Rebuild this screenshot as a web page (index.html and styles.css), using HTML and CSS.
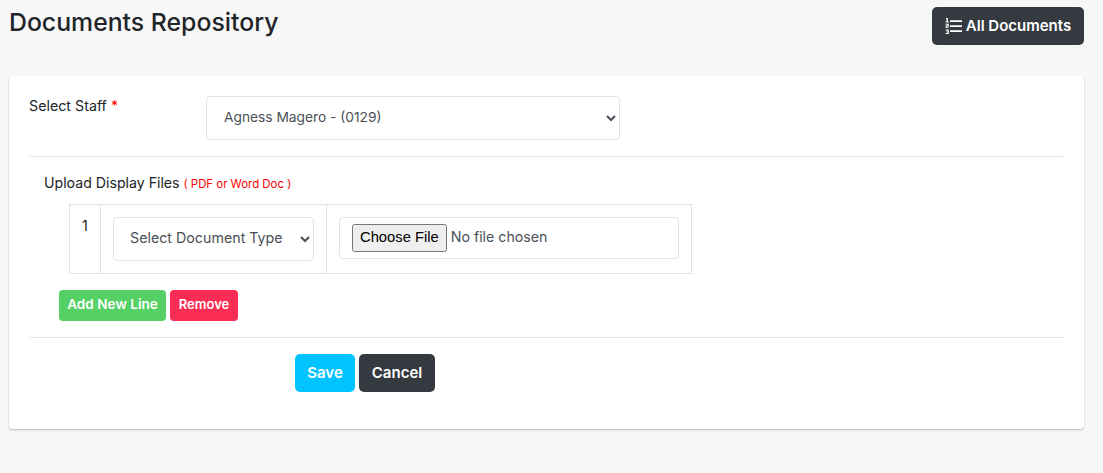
FILE: index.html
```html
<!DOCTYPE html>
<html lang="en">
<head>
<meta charset="utf-8">
<title>Documents Repository</title>
<link rel="stylesheet" href="styles.css">
</head>
<body>
<header class="page-head">
  <h1 class="page-title">Documents Repository</h1>
  <a class="btn btn-dark btn-all" href="#">
    <svg class="icon-list" viewBox="0 0 17 16" width="17" height="16" aria-hidden="true">
      <path d="M5 2.2h12v1.7H5zM5 7.2h12v1.7H5zM5 12.2h12v1.7H5z" fill="#fff"/>
      <path d="M1.4 0h1.5v3.4h1v1H.5v-1h1V1.1H.9zM.6 5.8h3.2v2.5H1.9v.5h1.9v1H.6V7.4h1.9v-.6H.6zM.6 11.4h3.2V16H.6v-1h1.9v-.7H1.2v-.9h1.3v-1H.6z" fill="#fff"/>
    </svg>
    <span>All Documents</span>
  </a>
</header>
<main class="card">
  <div class="staff-row">
    <label class="staff-label">Select Staff <span class="req">*</span></label>
    <select class="control staff-select">
      <option>Agness Magero - (0129)</option>
    </select>
  </div>
  <hr class="rule">
  <div class="upload">
    <div class="upload-title">Upload Display Files <small class="hint">( PDF or Word Doc )</small></div>
    <table class="files">
      <tr>
        <td class="num">1</td>
        <td class="type"><select class="control type-select"><option>Select Document Type</option></select></td>
        <td class="file"><input class="control file-input" type="file"></td>
      </tr>
    </table>
  </div>
  <div class="line-actions">
    <button class="btn btn-sm btn-green" type="button">Add New Line</button>
    <button class="btn btn-sm btn-red" type="button">Remove</button>
  </div>
  <hr class="rule">
  <div class="form-actions">
    <button class="btn btn-cyan" type="button">Save</button>
    <button class="btn btn-dark" type="button">Cancel</button>
  </div>
</main>
</body>
</html>
```
FILE: styles.css
```css
* { box-sizing: border-box; }
html, body { height: 100%; }
body {
  margin: 0;
  padding: 0 19px 0 9px;
  background: #f7f7f7;
  color: #212529;
  font-family: Inter, "Liberation Sans", sans-serif;
  font-size: 14.25px;
  overflow: hidden;
}
.page-head {
  display: flex;
  justify-content: space-between;
  align-items: flex-start;
  padding-top: 7px;
  height: 76px;
}
.page-title {
  margin: -1px 0 0;
  font-size: 24.8px;
  line-height: 32px;
  font-weight: 500;
  color: #212529;
}
.btn {
  display: inline-flex;
  align-items: center;
  justify-content: center;
  border: 0;
  border-radius: 5px;
  color: #fff;
  font-family: inherit;
  font-size: 15px;
  font-weight: 600;
  text-decoration: none;
  padding: 0 0 2px;
}
.btn-dark { background: #343a40; }
.btn-all { width: 152px; height: 38px; gap: 4px; padding-bottom: 1px; }
.icon-list { flex: none; }
.btn-cyan { background: #00c3ff; width: 60px; height: 38px; }
.form-actions .btn-dark { width: 76px; height: 38px; }
.btn-sm { height: 31px; font-size: 13px; border-radius: 4px; padding-bottom: 4px; }
.btn-green { background: #54d065; width: 107px; font-size: 13.6px; }
.btn-red { background: #fb2d55; width: 68px; }
.card {
  height: 353px;
  background: #fff;
  border-radius: 4px;
  box-shadow: 0 1px 2px rgba(0,0,0,.25);
  padding: 20px 21px 20px 20px;
}
.staff-row { display: flex; align-items: flex-start; }
.staff-label { width: 177px; line-height: 20px; color: #212529; }
.req { color: #f00; }
.control {
  height: 44px;
  background: #fff;
  border: 1px solid #e2e2e8;
  border-radius: 4px;
  color: #495057;
  font-family: inherit;
  font-size: 14.2px;
}
.staff-select { width: 414px; padding: 0 13px 2px; font-size: 13.75px; }
.rule { border: 0; border-top: 1px solid #e4e4e4; margin: 16px 0 0; }
.upload { padding: 17px 0 0 15px; }
.upload-title { line-height: 18px; font-size: 14.15px; }
.hint { color: #f00; font-size: 11.4px; }
.files {
  border-collapse: collapse;
  margin: 11px 0 0 25px;
  width: 623px;
  height: 70px;
}
.files td { border: 1px solid #dfdfe6; padding: 12px; vertical-align: top; }
.files .num { width: 32px; }
.files .type { width: 226px; }
.type-select { width: 201px; padding: 0 12px 4px; font-size: 14.25px; }
.file-input { width: 340px; height: 42px; padding: 6px 12px; }
.file-input::file-selector-button { font-size: 14.75px; height: 28px; padding-bottom: 3px; }
.line-actions { display: flex; gap: 4px; margin: 16px 0 16px 30px; }
.form-actions { display: flex; gap: 4px; margin: 16px 0 0 266px; }
```
